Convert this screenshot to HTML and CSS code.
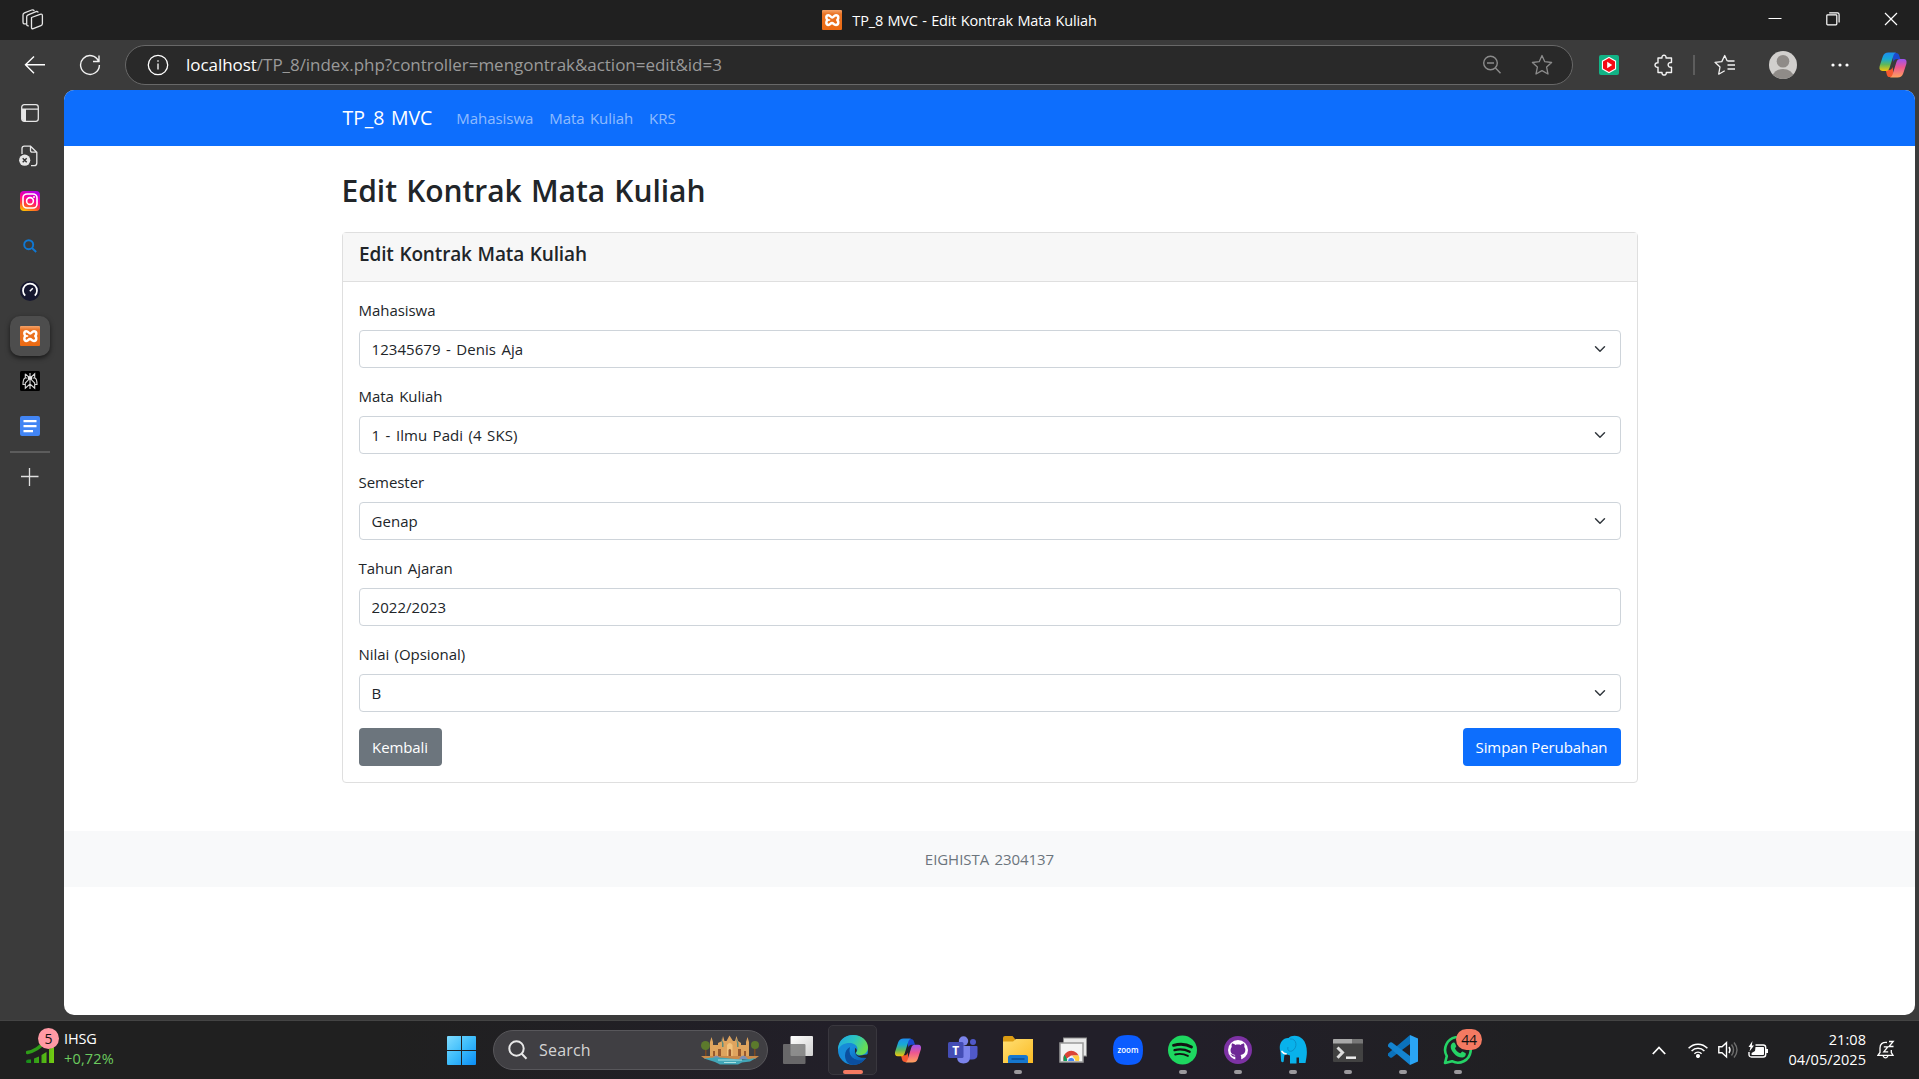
FILE: index.html
```html
<!DOCTYPE html>
<html lang="id">
<head>
<meta charset="utf-8">
<title>TP_8 MVC - Edit Kontrak Mata Kuliah</title>
<link rel="stylesheet" href="styles.css">
</head>
<body>
<svg class="defs" width="0" height="0">
  <defs>
    <linearGradient id="orange" x1="0" y1="0" x2="0" y2="1"><stop offset="0" stop-color="#f4a269"/><stop offset=".2" stop-color="#ea7426"/><stop offset="1" stop-color="#ec6a12"/></linearGradient>
    <linearGradient id="cpBlue" x1="0" y1="0" x2="0" y2="1"><stop offset="0" stop-color="#1d8df0"/><stop offset=".35" stop-color="#18a9d4"/><stop offset=".65" stop-color="#5fb85a"/><stop offset="1" stop-color="#f5c60c"/></linearGradient>
    <linearGradient id="cpPink" x1="0" y1="0" x2="0" y2="1"><stop offset="0" stop-color="#9b52f0"/><stop offset=".45" stop-color="#ee5790"/><stop offset="1" stop-color="#ffa25c"/></linearGradient>
    <linearGradient id="insta" x1=".2" y1="1" x2=".6" y2="0"><stop offset="0" stop-color="#ffc400"/><stop offset=".3" stop-color="#ff4a30"/><stop offset=".6" stop-color="#ff0094"/><stop offset="1" stop-color="#b800e8"/></linearGradient>
    <linearGradient id="win" x1="0" y1="0" x2="1" y2="1"><stop offset="0" stop-color="#7fdcff"/><stop offset=".5" stop-color="#3cbcfb"/><stop offset="1" stop-color="#0a8df5"/></linearGradient>
    <linearGradient id="edgeTop" x1="0" y1="0" x2="1" y2=".4"><stop offset="0" stop-color="#1fa6e6"/><stop offset=".55" stop-color="#2cc5c0"/><stop offset="1" stop-color="#66dd55"/></linearGradient>
    <linearGradient id="edgeLow" x1="0" y1="0" x2="1" y2="1"><stop offset="0" stop-color="#1692e4"/><stop offset="1" stop-color="#0a58ad"/></linearGradient>
    <linearGradient id="folder" x1="0" y1="0" x2="1" y2="1"><stop offset="0" stop-color="#ffdf73"/><stop offset="1" stop-color="#fbbb24"/></linearGradient>
    <linearGradient id="bars" x1="0" y1="0" x2="1" y2="0"><stop offset="0" stop-color="#138a1b"/><stop offset="1" stop-color="#74cc12"/></linearGradient>
    <linearGradient id="view" x1="0" y1="0" x2="1" y2="1"><stop offset="0" stop-color="#fff"/><stop offset="1" stop-color="#cfcfcf"/></linearGradient>
    <symbol id="xampp" viewBox="0 0 20 20">
      <rect width="20" height="20" rx="1" fill="url(#orange)"/>
      <path d="M6.300 5.300C3.800 5.300 3.800 8.700 5.600 10 3.800 11.300 3.800 14.900 6.300 14.900 8.600 14.900 8.200 13 10 13S11.400 14.900 14 14.900C16.700 14.900 16.900 11.600 15.300 10 16.900 8.400 16.700 5.300 14 5.300 11.800 5.300 11.800 7.500 10.200 7.500S8.600 5.300 6.300 5.300Z" fill="none" stroke="#fff" stroke-width="2.500" stroke-linejoin="round"/>
      <path d="M5 10h3.200" stroke="#fff" stroke-width="1.600"/>
    </symbol>
    <symbol id="copilot" viewBox="0 0 28 26">
      <path d="M13 1h4c2 0 2.700.8 3.300 2.800L21.300 7H18c-2 0-3 1-3.600 3z" fill="#1c49cf"/>
      <path d="M15 25h-4c-2 0-2.700-.8-3.300-2.800L6.700 18H10c2 0 3-1 3.600-3z" fill="#f4582f"/>
      <path d="M9.500.5h7.800c-1.700.3-2.500 1.800-3 3.500l-3.600 11.500c-.8 2.400-1.700 3.500-4 3.500H3.500C.8 19 0 17 .6 14.300L3.800 4.500C4.700 1.800 6.500.5 9.500.5z" fill="url(#cpBlue)"/>
      <path d="M18.500 25.500h-7.800c1.700-.3 2.500-1.800 3-3.500l3.600-11.500c.8-2.400 1.700-3.500 4-3.500h3.200c2.700 0 3.500 2 2.900 4.700l-3.200 9.800c-.9 2.700-2.700 4-5.700 4z" fill="url(#cpPink)"/>
    </symbol>
  </defs>
</svg>

<div class="browser">
  <header class="titlebar">
    <div class="workspaces">
      <svg width="22" height="22" viewBox="0 0 22 22" fill="none" stroke="#e6e6e6" stroke-width="1.300" stroke-linejoin="round"><path d="M9.500 8.500 18 5.300c1.500-.5 2.400 0 2.400 1.500v7.700c0 1-.5 1.700-1.500 2.100l-7.700 3c-1.200.4-1.700 0-1.700-1zM6.800 16.800c-1.700.2-2.100-.3-2.100-1.800V7.800c0-1 .5-1.600 1.500-2L14 2.700c1-.4 1.900-.1 2.300.9M4 14.800c-2.200.5-3-.1-3-1.900V6c0-1 .5-1.700 1.500-2.100L9.700 1c1.200-.4 2-.2 2.600.8"/></svg>
    </div>
    <div class="window-title"><svg width="20" height="20"><use href="#xampp"/></svg><span>TP_8 MVC - Edit Kontrak Mata Kuliah</span></div>
    <div class="window-buttons">
      <svg width="14" height="14" viewBox="0 0 14 14" stroke="#fff"><path d="M.5 6.500h13"/></svg>
      <svg width="14" height="14" viewBox="0 0 14 14" fill="none" stroke="#fff" stroke-width="1.200"><rect x=".8" y="2.800" width="10" height="10" rx=".8"/><path d="M3.200.8h8.300c1 0 1.600.6 1.600 1.600v8"/></svg>
      <svg width="14" height="14" viewBox="0 0 14 14" stroke="#fff" stroke-width="1.200"><path d="m1 1 12 12M13 1 1 13"/></svg>
    </div>
  </header>

  <div class="toolbar">
    <svg class="back" width="22" height="20" viewBox="0 0 22 20" fill="none" stroke="#fff" stroke-width="1.400"><path d="M10 1.500 1.500 9.800 10 18.300M1.500 9.800H21"/></svg>
    <svg class="reload" width="22" height="22" viewBox="0 0 22 22" fill="none" stroke="#f2f2f2" stroke-width="1.400"><path d="M19.600 7.200A9.400 9.400 0 1 0 20.400 11M20 1.500v6h-6"/></svg>
    <div class="address">
      <svg width="22" height="22" viewBox="0 0 22 22" fill="none" stroke="#fff" stroke-width="1.300"><circle cx="11" cy="11" r="9.700"/><path d="M11 9.600v6M11 6.200v1.600"/></svg>
      <p class="url"><b>localhost</b>/TP_8/index.php?controller=mengontrak&amp;action=edit&amp;id=3</p>
      <svg class="zoom-out" width="20" height="20" viewBox="0 0 20 20" fill="none" stroke="#8b8b8b" stroke-width="1.400"><circle cx="8.500" cy="8" r="6.800"/><path d="m13.500 13 5 5.200M5 8h7"/></svg>
      <svg width="22" height="22" viewBox="0 0 22 22" fill="none" stroke="#8b8b8b" stroke-width="1.300" stroke-linejoin="round"><path d="m11 1.500 2.800 6.200 6.800.8-5 4.600 1.400 6.900-6-3.400-6 3.400 1.400-6.900-5-4.600 6.800-.8z"/></svg>
    </div>
    <svg class="ext" width="20" height="20" viewBox="0 0 20 20"><rect width="20" height="20" rx="2" fill="#12b386"/><path d="m10 1.700 7.100 4.100v8.400L10 18.300l-7.100-4.100V5.800z" fill="#fff"/><path d="m10 3 6 3.500v7L10 17l-6-3.500v-7z" fill="#f50a14"/><path d="m8.200 6.800 5 3.200-5 3.200z" fill="#fff"/></svg>
    <svg class="puzzle" width="20" height="22" viewBox="0 0 20 22" fill="none" stroke="#f2f2f2" stroke-width="1.400" stroke-linejoin="round"><path d="M4 4h4c-.7-3.700 4.700-3.700 4 0h5.500v4.500c-4.500-.8-4.500 5.500 0 4.700v5.300H12.300c.4 3.400-4.700 3.400-4.300 0H4v-5.200c-4 .5-4-5 0-4.500z"/></svg>
    <i class="sep"></i>
    <svg class="favs" width="22" height="22" viewBox="0 0 22 22" fill="none" stroke="#f2f2f2" stroke-width="1.300" stroke-linejoin="round"><path d="M20.500 7h-6.200l-1.200-.3L10.700 1.500 7.800 7.600 1 8.300l5 4.700-1.300 7.200 6-3.400M13.500 11h7.500M13.500 15h7.500"/></svg>
    <svg class="avatar" width="28" height="28" viewBox="0 0 28 28"><clipPath id="av"><circle cx="14" cy="14" r="14"/></clipPath><g clip-path="url(#av)"><path fill="#d1cfcd" d="M0 0h28v28H0z"/><circle cx="14" cy="10.300" r="6.300" fill="#8f8b88"/><ellipse cx="14" cy="26" rx="10.500" ry="8" fill="#8f8b88"/></g></svg>
    <svg class="more" width="18" height="4" viewBox="0 0 18 4" fill="#fff"><circle cx="2" cy="2" r="1.600"/><circle cx="9" cy="2" r="1.600"/><circle cx="16" cy="2" r="1.600"/></svg>
    <svg class="cp" width="28" height="26"><use href="#copilot"/></svg>
  </div>

  <div class="workarea">
    <nav class="tabs">
      <div class="tab tab-menu"><svg width="18" height="18" viewBox="0 0 18 18"><rect x=".7" y=".7" width="16.600" height="16.600" rx="2.500" fill="none" stroke="#e6e6e6" stroke-width="1.300"/><path d="M1 4.500h16v1.200H5V17H2.500L1 15.500z" fill="#e6e6e6"/></svg></div>
      <div class="tab tab-closed"><svg width="20" height="22" viewBox="0 0 20 22"><path d="M3 9V3.500C3 2 3.800 1.200 5.300 1.200h6.200l6.300 6V18c0 1.800-.8 2.700-2.600 2.700H12M11.500 1.400v4c0 1.200.6 1.800 1.800 1.800h4.300" fill="none" stroke="#e6e6e6" stroke-width="1.300"/><circle cx="5.700" cy="15.200" r="5.600" fill="#e6e6e6"/><path d="m3.700 13.200 4 4m0-4-4 4" stroke="#333" stroke-width="1.400"/></svg></div>
      <div class="tab"><svg width="20" height="20" viewBox="0 0 20 20"><rect width="20" height="20" rx="4" fill="url(#insta)"/><g fill="none" stroke="#fff" stroke-width="1.600"><rect x="3" y="3" width="14" height="14" rx="4"/><circle cx="10" cy="10" r="3.400"/></g><circle cx="14" cy="6" r="1" fill="#fff"/></svg></div>
      <div class="tab"><svg width="14" height="14" viewBox="0 0 14 14" fill="none" stroke="#0f78d4" stroke-width="1.900"><circle cx="5.700" cy="5.700" r="4.500"/><path d="m9 9 4.200 4"/></svg></div>
      <div class="tab"><svg width="20" height="20" viewBox="0 0 20 20"><circle cx="10" cy="10" r="10" fill="#16172f"/><path d="M5.200 14.700a7 7 0 1 1 9.600 0" fill="none" stroke="#fff" stroke-width="1.700"/><path d="m9.800 10.200 3-3" stroke="#fff" stroke-width="1.500"/></svg></div>
      <div class="tab"><div class="tab-active"><svg width="20" height="20"><use href="#xampp"/></svg></div></div>
      <div class="tab"><svg width="20" height="20" viewBox="0 0 20 20"><rect width="20" height="20" rx="1.500" fill="#000"/><path d="M10 2v16M5.300 2.800 10 7.200l4.700-4.400v4M5.300 2.800v4M10 7.200 5.300 12v5.200L10 13l4.700 4.200V12zM7.500 7H5Q3 8 3 13.500h2.300M12.500 7H15q2 1 2 6.500h-2.300" fill="none" stroke="#d8d8d8" stroke-width="1.100"/><path d="M8 5.300h4v3.200H8z" fill="#e8e8e8"/></svg></div>
      <div class="tab"><svg width="20" height="20" viewBox="0 0 20 20"><rect width="20" height="20" rx="2" fill="#4285f4"/><path d="M3.500 5.200h13M3.500 10.200h13M3.500 15.200H13" stroke="#fff" stroke-width="2.200"/></svg></div>
      <i class="tab-rule"></i>
      <svg class="new-tab" width="18" height="18" viewBox="0 0 18 18" stroke="#e0e0e0" stroke-width="1.300"><path d="M8.500 0v18M0 8.500h17.500"/></svg>
    </nav>

    <main class="page">
      <nav class="navbar"><div class="container nav-row">
        <a class="brand">TP_8 MVC</a>
        <a class="nav-link">Mahasiswa</a><a class="nav-link">Mata Kuliah</a><a class="nav-link">KRS</a>
      </div></nav>
      <div class="container content">
        <h2>Edit Kontrak Mata Kuliah</h2>
        <section class="card">
          <div class="card-header"><h5>Edit Kontrak Mata Kuliah</h5></div>
          <form class="card-body">
            <div class="field"><label>Mahasiswa</label><select class="control"><option>12345679 - Denis Aja</option></select></div>
            <div class="field"><label>Mata Kuliah</label><select class="control"><option>1 - Ilmu Padi (4 SKS)</option></select></div>
            <div class="field"><label>Semester</label><select class="control"><option>Genap</option></select></div>
            <div class="field"><label>Tahun Ajaran</label><input class="control" type="text" value="2022/2023"></div>
            <div class="field"><label>Nilai (Opsional)</label><select class="control"><option>B</option></select></div>
            <div class="actions"><button class="btn btn-secondary" type="button">Kembali</button><button class="btn btn-primary" type="button">Simpan Perubahan</button></div>
          </form>
        </section>
      </div>
      <footer class="footer">EIGHISTA 2304137</footer>
    </main>
  </div>
</div>

<div class="taskbar">
  <div class="widget">
    <div class="widget-icon">
      <svg width="28" height="22" viewBox="0 0 28 22"><path d="M1.500 9.500C9 8 13 4.500 18 0" fill="none" stroke="#2f9d18" stroke-width="3.500" stroke-linecap="round"/><path d="M0 18.500q0-2 2.500-2h2.500v3.500H1.500Q0 20 0 18.500zM8 20v-4.500l5-2V20zM15.500 20v-8l5-3V20zM23 20V6l5-2v16z" fill="url(#bars)"/></svg>
      <span class="badge badge-pink">5</span>
    </div>
    <div class="widget-text"><span>IHSG</span><span class="up">+0,72%</span></div>
  </div>

  <div class="dock">
    <div class="app app-start"><svg width="29" height="29" viewBox="0 0 29 29"><path d="M1 0h13v14H0V1q0-1 1-1zM15 0h13q1 0 1 1v13H15zM0 15h14v14H1q-1 0-1-1zM15 15h14v13q0 1-1 1H15z" fill="url(#win)"/></svg></div>
    <div class="search">
      <svg width="20" height="20" viewBox="0 0 20 20" fill="none" stroke="#e8e8e8" stroke-width="2"><circle cx="8.500" cy="8.500" r="7.200"/><path d="m13.500 13.500 5 5.200"/></svg>
      <span>Search</span>
      <svg class="palace" width="60" height="30" viewBox="0 0 60 30">
        <path d="M5 11h1.500v12H5zM54 11h1.500v12H54z" fill="#7a4a22"/>
        <circle cx="5.500" cy="10.500" r="4.500" fill="#5c7a2c"/><circle cx="55" cy="10" r="4" fill="#5c7a2c"/>
        <path d="M10 22V7l1.500-5L13 7v3h5V8l4-2 1-5 1.500 5h2L29.500.5 33 6h2l1.500-5L38 6l3 2v2h5V7l1.500-5L49 7v15z" fill="#dfa45e"/>
        <path d="M27 22V10q2.700-4 5.500 0v12z" fill="#f2c37d"/>
        <path d="M13 22v-6h2v6zm5 0v-8h3v8zm20 0v-8h3v8zm6 0v-6h2v6zM28.500 22v-7q1.300-2 2.600 0v7z" fill="#97592f"/>
        <path d="M21 3l1 5v4h1.500V8zM36 3l1 5v4h1.500V8z" fill="#5c8b7c"/>
        <path d="M1 21h58l-4 3H5z" fill="#c98a4a"/>
        <path d="M12 24q4-7 9 0zM39 24q4-7 9 0z" fill="#7d8fb5"/>
        <path d="M4 23.500q12-2 26 0t26-.5l-6 3.500-8 1-4 2H20l-5-2.500z" fill="#42a6b7"/><path d="M18 25h24M24 27.500h12" stroke="#a9e2e2" stroke-width="1"/>
      </svg>
    </div>
    <div class="app app-view"><svg width="30" height="28" viewBox="0 0 30 28"><rect x="7.500" width="22.500" height="20" rx="1" fill="url(#view)"/><rect y="8" width="22.500" height="20" rx="1" fill="#777" fill-opacity=".82"/></svg></div>
    <div class="app active"><svg width="30" height="30" viewBox="0 0 30 30"><circle cx="15" cy="15" r="15" fill="#178bd8"/><path d="M0 13C1 5 7 0 15 0c9 0 15 6 15 12.500 0 5-4 7.500-7.500 7.500-3 0-4.500-1-4.500-2s1.500-1.500 1.500-4C19.500 10.500 16 8 11.500 8 6 8 2 10.500 0 15z" fill="url(#edgeTop)"/><path d="M18 17.500c-.5 3 3 5 6.500 5 1.800 0 3-.5 4-1C26 26.500 21 30 15.500 30 10 30 7 25.500 7 20.500c0-4 2-7 5-8.500-1.500 6 1 11 6 12z" fill="#0b4f9f"/><path d="M12.500 12C16 10.500 18 12 19 13c0 2-1.500 3-1.500 4.500 0 2.500 3 4.500 6.500 4.500l4-.8c1.800-.7 1.500.4.500 1.500-3 3.300-9 3.500-13 .3-3.200-2.500-4.500-6.500-3-11z" fill="url(#edgeLow)"/><path d="M17 13c2 1 2.500 3 .8 4.500-.7.8.3 2.500 3.200 3.300L31 19v4l-6-.3c-5 0-8.500-3-8-7z" fill="#27262c"/></svg><i class="run run-active"></i></div>
    <div class="app"><svg width="28" height="25"><use href="#copilot"/></svg></div>
    <div class="app"><svg width="30" height="28" viewBox="0 0 30 28"><circle cx="15.500" cy="5" r="4.700" fill="#7b83eb"/><circle cx="25" cy="6" r="3" fill="#5059c9"/><path d="M20 10h8.500q1 0 1 1v7.500q0 5-5.500 5h-4z" fill="#5059c9"/><path d="M9 10h13v10.500q0 7-6.500 7T9 20.500z" fill="#7b83eb"/><rect y="6" width="15.500" height="16" rx="1.500" fill="#444db5"/><text x="7.700" y="18.500" text-anchor="middle" font-family="Open Sans, sans-serif" font-size="12" font-weight="700" fill="#fff">T</text></svg></div>
    <div class="app"><svg width="30" height="28" viewBox="0 0 30 28"><path d="M0 2q0-2 2-2h7.500l3 3.500v8H0z" fill="#dc9c13"/><path d="M0 5.500h10L13 3h17v24H0z" fill="url(#folder)"/><path d="M5 27v-5.500Q5 19 7.500 19h15q2.500 0 2.500 2.500V27z" fill="#1677cf"/><path d="M8.500 23h13" stroke="#0b4c93" stroke-width="1.500"/></svg><i class="run"></i></div>
    <div class="app"><svg width="28" height="26" viewBox="0 0 28 26"><rect x="4.500" y="1" width="23" height="18" fill="#e8e8e8" stroke="#8d8d8d"/><rect x="1" y="6" width="23" height="19" fill="#f3f3f3" stroke="#999" stroke-width="1.500"/><path d="M4.500 24a8 8 0 0 1 4-9.300 8 8 0 0 1 11.200 3.800H12z" fill="#db4437"/><path d="M4.500 24q-.5-4 1-6.500L9 24z" fill="#0f9d58"/><path d="M19.700 18.500Q21 21 20 24h-5l-1.500-5.500z" fill="#ffcd40"/><path d="M8.500 24a3.700 3.700 0 1 1 7.400 0" fill="#4285f4" stroke="#fff"/></svg></div>
    <div class="app"><svg width="30" height="30" viewBox="0 0 30 30"><path d="M15 0c11 0 15 4 15 15s-4 15-15 15S0 26 0 15 4 0 15 0z" fill="#0b5cff"/><text x="15" y="17.500" text-anchor="middle" font-family="Open Sans, sans-serif" font-size="8.500" font-weight="600" textLength="21" lengthAdjust="spacingAndGlyphs" fill="#fff">zoom</text></svg></div>
    <div class="app"><svg width="29" height="30" viewBox="0 0 29 29"><circle cx="14.500" cy="14.500" r="14.500" fill="#1ed760"/><g fill="none" stroke="#121212" stroke-linecap="round"><path d="M5.500 9.800c6-1.600 13-1.300 18 1.700" stroke-width="2.800"/><path d="M6.500 14.600c5-1.300 10.500-.8 15.200 1.600" stroke-width="2.300"/><path d="M7.200 19c4-1 8.700-.6 12.700 1.400" stroke-width="1.900"/></g></svg><i class="run"></i></div>
    <div class="app"><svg width="28" height="28" viewBox="0 0 28 28"><circle cx="14" cy="14" r="14" fill="#7d32a4"/><circle cx="14" cy="14" r="10" fill="#fff"/><path d="M11.300 24v-3.300c-3 .5-3.500-1.700-4.800-2.300 2-.8 2.500 1.500 4.300 1 .2 0 .4-.2.700-.5-4-.6-5.500-3-4.800-6 .2-.8.5-1.400 1-2-.3-1.200-.2-2.300.3-3.300 1.300 0 2.500.7 3.300 1.300 1.800-.4 3.600-.4 5.400 0 .8-.6 2-1.300 3.300-1.300.5 1 .6 2.100.3 3.300 1.800 2 1.700 7.200-3.800 8 .5.600.7 1.200.7 2V24z" fill="#6d2895"/></svg><i class="run"></i></div>
    <div class="app"><svg width="28" height="30" viewBox="0 0 28 30"><path d="M1.500 17C-1 10 3 2.500 9.500 3 12.500-.5 20 0 23.500 4c4 4 5 11 4 18l-1 6h-6.500v-5.500h-2.500V28.500H11V20.500L6.500 19c-2 1-1 5-2 8-2 .5-2.500-.5-2.500-2Z" fill="#08b2eb"/><path d="M3 16.500c1 1.500 2.300 2.300 4 2.300" fill="none" stroke="#fff" stroke-width="1.800" stroke-linecap="round"/><path d="M11 4c7-1 8 9 2 12-3 1-5-1-4-4" fill="none" stroke="#0a87be" stroke-width=".8"/></svg><i class="run"></i></div>
    <div class="app"><svg width="30" height="23" viewBox="0 0 30 23"><rect width="30" height="23" rx="1" fill="#424242"/><path d="M0 4.500V1q0-1 1-1h18v4.500z" fill="#a9a9a9"/><path d="M19 0h10q1 0 1 1v3.500H19z" fill="#777"/><path d="m4.500 8.500 5 5-5 5.200" fill="none" stroke="#ddd" stroke-width="3"/><path d="M13 18.700h10" stroke="#eee" stroke-width="2.500"/></svg><i class="run"></i></div>
    <div class="app"><svg width="30" height="30" viewBox="0 0 30 30"><path d="M22 0v9L4 22.500q-1 .5-2 0l-2-2q-.5-1 0-2z" fill="#0b72bb"/><path d="M22 30v-9L4 7.500q-1-.5-2 0l-2 2q-.5 1 0 2z" fill="#1484d0"/><path d="m22 0 8 3.500v23L22 30z" fill="#2aa5f5"/></svg><i class="run"></i></div>
    <div class="app"><svg width="30" height="30" viewBox="0 0 30 30"><path d="M2 28l1.800-6.800A12.800 12.800 0 1 1 9 26.200z" fill="none" stroke="#25d366" stroke-width="2.600" stroke-linejoin="round"/><path d="M10.500 7.500c1 0 1.500.3 2.700 3.500.3.800-1.200 2-1.200 2.500 1.300 2.500 3 4 5.200 4.800.6.200 1.800-1.900 2.300-1.700l3.200 1.600c.7 2.800-1.700 4.300-3.700 4.300C13 22.500 7.500 15.500 7.700 11.700c0-1.800 1.300-4.200 2.800-4.200z" fill="#25d366"/></svg><span class="badge badge-coral">44</span><i class="run"></i></div>
  </div>

  <div class="tray">
    <svg class="chev" width="14" height="9" viewBox="0 0 14 9" fill="none" stroke="#fff" stroke-width="1.800"><path d="m.8 8 6.200-6.500L13.200 8"/></svg>
    <svg class="wifi" width="20" height="16" viewBox="0 0 20 16" fill="none" stroke="#fff" stroke-width="1.500"><path d="M.6 6.200a13 13 0 0 1 18.800 0M3.600 9a9 9 0 0 1 12.800 0M6.400 11.700a5.200 5.200 0 0 1 7.200 0"/><circle cx="10" cy="14" r="1.300" fill="#fff"/></svg>
    <svg class="sound" width="20" height="18" viewBox="0 0 20 18" fill="none" stroke="#fff" stroke-width="1.400"><path d="M.8 5.800H4L8.500 1.700v14.200L4 11.800H.8zM11 6q2 3 0 6"/><path d="M13.500 3.500q4 5.500 0 11M16 1.500q6 7.500 0 15" stroke="#6e6e6e"/></svg>
    <svg class="battery" width="20" height="18" viewBox="0 0 20 18"><path d="M7.500 4h7.700q2.500 0 2.500 2.500v7q0 2.500-2.500 2.500H3.500Q1 16 1 13.500V11" fill="none" stroke="#fff" stroke-width="1.400"/><path d="M7.500 6h7.700q.8 0 .8.800v6.400q0 .8-.8.800H3.600v-2L7 10z" fill="#fff"/><path d="M18 8h2v4h-2zM4.500 0 .5 6h2L1.500 10.500 6 4.500H3.800z" fill="#fff"/></svg>
    <div class="clock"><span>21:08</span><span>04/05/2025</span></div>
    <svg width="18" height="20" viewBox="0 0 18 20" fill="none" stroke="#fff" stroke-width="1.300"><path d="M10 2.500Q3 2 3 8v4.500L1 15.300h15l-1.700-2.800V10M6 16q2.500 3.800 5 0M6.800 6.800h4l-4 5h4.400M12 1.500h4.200L12 6.500h4.500"/></svg>
  </div>
</div>
</body>
</html>
```
FILE: styles.css
```css
* { box-sizing: border-box; }
html, body { margin: 0; height: 100%; overflow: hidden; }
body {
  display: flex;
  flex-direction: column;
  background: #3b3b3b;
  color: #212529;
  font-family: "Open Sans", "Noto Sans", sans-serif;
  font-size: 15px;
}
svg { display: block; flex: none; }
.defs { position: absolute; }

.browser { flex: 1; display: flex; flex-direction: column; min-height: 0; }
.titlebar {
  height: 40px;
  flex: none;
  display: grid;
  grid-template-columns: 1fr auto 1fr;
  align-items: center;
  background: #202020;
  color: #fff;
}
.workspaces { padding-left: 22px; }
.window-title { display: flex; align-items: center; gap: 10px; font-size: 14.5px; letter-spacing: -.15px; word-spacing: .8px; white-space: nowrap; }
.window-buttons { display: flex; justify-content: flex-end; gap: 44px; padding: 0 21px 2px 0; }

.toolbar { height: 50px; flex: none; display: flex; align-items: center; padding-left: 24px; }
.reload { margin-left: 33px; }
.address {
  width: 1448px;
  height: 40px;
  margin-left: 24px;
  padding: 0 19px 0 21px;
  display: flex;
  align-items: center;
  border: 1px solid #686868;
  border-radius: 20px;
  background: #292929;
}
.url { flex: 1; margin: 0 0 2px 17px; color: #9a9a9a; font-size: 17px; letter-spacing: -.04px; }
.url b { color: #fff; font-weight: 400; }
.zoom-out { margin-right: 29px; }
.ext { margin-left: 26px; }
.puzzle { margin-left: 35px; }
.sep { width: 2px; height: 20px; margin-left: 19px; background: #5d5d5d; }
.favs { margin-left: 19px; }
.avatar { margin-left: 33px; }
.more { margin-left: 34px; }
.cp { margin-left: 30px; }

.workarea { flex: 1; display: flex; min-height: 0; padding: 0 4px 5px 0; }
.tabs { width: 64px; flex: none; display: flex; flex-direction: column; }
.tab { width: 60px; height: 45px; display: grid; place-items: center; }
.tab-menu { height: 46px; }
.tab-closed { height: 42px; padding: 0 2px 2px 0; }
.tab-active {
  width: 40px;
  height: 40px;
  display: grid;
  place-items: center;
  border-radius: 10px;
  background: #4d4d4d;
  box-shadow: 0 2px 5px rgba(0, 0, 0, .6);
}
.tab-rule { width: 40px; height: 2px; margin: 3px 0 0 10px; background: #5c5c5c; }
.new-tab { margin: 15px 0 0 21px; }

.page { flex: 1; overflow: hidden; border-radius: 10px; background: #fff; line-height: 24px; letter-spacing: -.05px; word-spacing: 1.5px; }
.container { width: 1320px; margin: 0 auto; padding: 0 12px; }
.navbar { height: 56px; background: #0d6efd; }
.nav-row { height: 56px; display: flex; align-items: center; color: rgba(255, 255, 255, .55); }
.brand { margin: 0 24px 0 1px; color: #fff; font-size: 19.5px; letter-spacing: -.05px; }
.nav-link { margin-right: 16px; }
.content { padding-top: 24px; }
h2 { margin: 0 0 22px; padding-top: 2px; font-size: 30px; font-weight: 600; line-height: 38.4px; }
h5 { margin: 0 0 7px; padding: 1px 0 0 .5px; font-size: 19px; font-weight: 600; line-height: 24px; letter-spacing: -.15px; word-spacing: 1px; }
.card { border: 1px solid #dfdfdf; border-radius: 4px; }
.card-header { padding: 8px 16px; border-bottom: 1px solid #dfdfdf; background: #f7f7f7; }
.card-body { padding: 16px; }
.field { margin-bottom: 16px; }
.field label { display: block; margin-bottom: 8px; }
.control {
  display: block;
  width: 100%;
  height: 38px;
  margin: 0;
  padding: 6px 12px;
  border: 1px solid #ced4da;
  border-radius: 4px;
  background: #fff;
  color: #212529;
  font: inherit;
  letter-spacing: .05px;
  word-spacing: inherit;
  line-height: 24px;
}
select.control {
  appearance: none;
  background: #fff url("data:image/svg+xml,%3csvg xmlns='http://www.w3.org/2000/svg' viewBox='0 0 16 16'%3e%3cpath fill='none' stroke='%23343a40' stroke-linecap='round' stroke-linejoin='round' stroke-width='2' d='m2 5 6 6 6-6'/%3e%3c/svg%3e") no-repeat right 12px center / 16px 12px;
}
.actions { display: flex; justify-content: space-between; }
.btn { height: 38px; padding: 0; border: 0; border-radius: 4px; color: #fff; font: inherit; letter-spacing: -.1px; }
.btn-secondary { width: 83px; background: #6c757d; }
.btn-primary { width: 158px; background: #0d6efd; }
.footer { margin-top: 48px; padding: 16px; background: #f8f9fa; color: #6c757d; text-align: center; }

.taskbar {
  height: 59px;
  flex: none;
  display: flex;
  border-top: 1px solid #444;
  background: linear-gradient(90deg, #202020 0 20%, #221f29 45% 62%, #202022 80%);
  color: #fff;
}
.widget { width: 434px; display: flex; padding-left: 26px; line-height: 20px; font-size: 14.5px; }
.widget-icon { position: relative; width: 38px; padding-top: 22px; }
.widget-text { display: flex; flex-direction: column; padding-top: 8px; letter-spacing: -.15px; }
.up { color: #6ccb5f; letter-spacing: .15px; }
.badge { position: absolute; color: #111; text-align: center; }
.badge-pink { left: 12px; top: 7px; width: 21px; height: 21px; border-radius: 50%; background: #ff99a4; font-size: 14px; line-height: 21px; }
.badge-coral { left: 26px; top: 8px; width: 26px; height: 21px; border-radius: 11px; background: #f47a62; font-size: 14px; line-height: 21px; letter-spacing: -.3px; }
.dock { display: flex; }
.app { position: relative; width: 55px; height: 58px; display: grid; place-items: center; }
.app-view { margin-left: 2px; }
.app.active::before {
  content: "";
  position: absolute;
  inset: 4px 3px;
  border: 1px solid #39373e;
  border-radius: 5px;
  background: #2b2930;
}
.app svg { position: relative; }
.run { position: absolute; left: 24px; bottom: 5px; width: 8px; height: 4px; border-radius: 2px; background: #9b999d; }
.run-active { left: 18px; width: 20px; background: #f47a62; }
.search {
  width: 275px;
  height: 40px;
  margin: 9px 0 0 4px;
  padding: 0 7px 0 14px;
  display: flex;
  align-items: center;
  border: 1px solid #58575b;
  border-radius: 20px;
  background: #403f43;
  color: #d4d4d4;
  font-size: 16px;
}
.search span { flex: 1; margin-left: 11px; letter-spacing: .2px; }
.tray { flex: 1; display: flex; align-items: center; justify-content: flex-end; padding-right: 24px; }
.wifi { margin-left: 22px; }
.sound { margin-left: 10px; }
.battery { margin-left: 10px; }
.clock { width: 98px; display: flex; flex-direction: column; align-items: flex-end; margin-right: 11px; font-size: 14.5px; line-height: 20px; letter-spacing: .05px; }
```
